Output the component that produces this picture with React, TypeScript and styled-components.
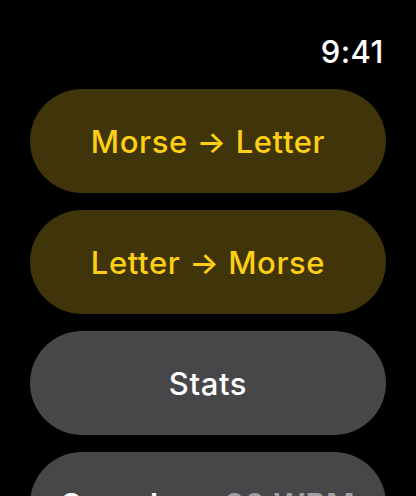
import styled, { createGlobalStyle } from 'styled-components';

const GlobalStyle = createGlobalStyle`
    html, body {
        margin: 0;
        padding: 0;
        background: #000;
    }
    body {
        font-family: Inter, "Noto Sans", "Liberation Sans", sans-serif;
        -webkit-font-smoothing: antialiased;
    }
`;

type Tone = 'accent' | 'plain';

const menu: { label: string; tone: Tone }[] = [
    { label: 'Morse → Letter', tone: 'accent' },
    { label: 'Letter → Morse', tone: 'accent' },
    { label: 'Stats', tone: 'plain' },
];

export default function App() {
    return (
        <>
            <GlobalStyle />
            <Screen>
                <StatusBar>
                    <Clock>9:41</Clock>
                </StatusBar>
                <List>
                    {menu.map(({ label, tone }) => (
                        <PillButton key={label} $tone={tone}>
                            {label}
                        </PillButton>
                    ))}
                    <SettingRow>
                        <SettingName>Speed</SettingName>
                        <SettingValue>20 WPM</SettingValue>
                    </SettingRow>
                </List>
            </Screen>
        </>
    );
}

const Screen = styled.div`
    width: 416px;
    height: 496px;
    overflow: hidden;
    background: #000;
    display: flex;
    flex-direction: column;
`;

const StatusBar = styled.div`
    display: flex;
    justify-content: flex-end;
    padding: 33px 32px 0 0;
    height: 56px;
    box-sizing: border-box;
`;

const Clock = styled.span`
    color: #fff;
    font-size: 31px;
    font-weight: 500;
    line-height: 38px;
    letter-spacing: 0.5px;
`;

const List = styled.div`
    display: flex;
    flex-direction: column;
    gap: 17px;
    padding: 33px 30px 0;
`;

const PillButton = styled.button<{ $tone: Tone }>`
    height: 104px;
    border: none;
    border-radius: 52px;
    font-family: inherit;
    font-size: 31px;
    font-weight: 500;
    letter-spacing: 0.6px;
    color: ${({ $tone }) => ($tone === 'accent' ? '#ffcf14' : '#ffffff')};
    background-color: ${({ $tone }) => ($tone === 'accent' ? '#40350a' : '#474749')};
    display: flex;
    align-items: center;
    justify-content: center;
    padding: 0;
`;

const SettingRow = styled.div`
    height: 104px;
    border-radius: 52px;
    background-color: #474749;
    display: flex;
    align-items: center;
    justify-content: space-between;
    padding: 0 31px;
    font-size: 31px;
    font-weight: 600;
    letter-spacing: 0.4px;
`;

const SettingName = styled.span`
    color: #fff;
`;

const SettingValue = styled.span`
    color: #a0a0a4;
`;
